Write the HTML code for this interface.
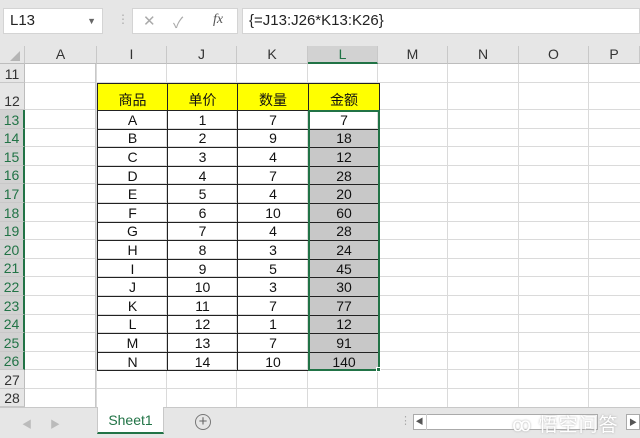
<!DOCTYPE html>
<html><head><meta charset="utf-8"><style>
*{margin:0;padding:0;box-sizing:border-box}
body{width:640px;height:438px;overflow:hidden;background:#fff;font-family:"Liberation Sans","Noto Sans CJK SC",sans-serif;position:relative}
.a{position:absolute}
.top{left:0;top:0;width:640px;height:46px;background:#e6e6e6}
.nb{left:3px;top:8px;width:100px;height:26px;background:#fff;border:1px solid #d4d4d4;font-size:15px;line-height:24px;padding-left:6px;color:#222}
.fb{left:132px;top:8px;width:106px;height:26px;background:#fff;border:1px solid #d4d4d4}
.fx{left:242px;top:8px;width:398px;height:26px;background:#fff;border:1px solid #d4d4d4;font-size:15px;line-height:24px;padding-left:6px;color:#222}
.ch{top:46px;height:18px;background:#e6e6e6;border-right:1px solid #c8c8c8;border-bottom:1px solid #bdbdbd;text-align:center;font-size:14px;line-height:17px;color:#333}
.rh{left:0;width:25px;background:#e6e6e6;border-bottom:1px solid #c8c8c8;border-right:1px solid #bdbdbd;font-size:14px;color:#333;text-align:center;display:flex;align-items:flex-end;justify-content:center;padding-bottom:0}
.hl{left:25px;width:615px;height:1px;background:#dadada}
.vl{top:64px;width:1px;height:343px;background:#dadada}
table{position:absolute;left:97px;top:83px;border-collapse:collapse;font-size:14px;color:#111}
td{border:1px solid #222;text-align:center;height:18.6px;padding:0;line-height:16px}
tr.h td{background:#ffff00;height:27px;font-size:14px;padding-top:6px}
td.g{background:#c8c8c8}
.sel{left:308px;top:110px;width:72px;height:261px;border:2px solid #217346}
.tb{left:0;top:407px;width:640px;height:31px;background:#e6e6e6;border-top:1px solid #c8c8c8}
</style></head><body>
<div class="a top"></div>
<div class="a nb">L13<span style="position:absolute;right:6px;top:0;font-size:9px;color:#666">▼</span></div>
<div class="a" style="left:117px;top:12px;color:#aaa;font-size:12px">⋮</div>
<div class="a fb"><span class="a" style="left:10px;top:3px;color:#aaa;font-size:15px">✕</span><span class="a" style="left:40px;top:3px;color:#aaa;font-size:15px">✓</span><span class="a" style="left:80px;top:3px;color:#555;font-size:14px;font-style:italic;font-family:'Liberation Serif',serif">fx</span></div>
<div class="a fx">{=J13:J26*K13:K26}</div>

<div class="a ch" style="left:0;width:25px;background:#e6e6e6"><span style="position:absolute;right:4px;bottom:2px;width:0;height:0;border-left:10px solid transparent;border-bottom:10px solid #b5b5b5"></span></div>
<div class="a ch" style="left:25px;width:72px">A</div>
<div class="a ch" style="left:97px;width:70px">I</div>
<div class="a ch" style="left:167px;width:70px">J</div>
<div class="a ch" style="left:237px;width:71px">K</div>
<div class="a ch" style="left:308px;width:70px;background:#d2d2d2;border-bottom:2px solid #217346;color:#217346">L</div>
<div class="a ch" style="left:378px;width:70px">M</div>
<div class="a ch" style="left:448px;width:71px">N</div>
<div class="a ch" style="left:519px;width:70px">O</div>
<div class="a ch" style="left:589px;width:51px">P</div>

<div class="a rh" style="top:64px;height:19px">11</div>
<div class="a rh" style="top:83px;height:27px">12</div>
<div class="a rh" style="top:110px;height:18.6px;background:#d2d2d2;color:#217346;border-right:2px solid #217346">13</div>
<div class="a rh" style="top:128.6px;height:18.6px;background:#d2d2d2;color:#217346;border-right:2px solid #217346">14</div>
<div class="a rh" style="top:147.2px;height:18.6px;background:#d2d2d2;color:#217346;border-right:2px solid #217346">15</div>
<div class="a rh" style="top:165.8px;height:18.6px;background:#d2d2d2;color:#217346;border-right:2px solid #217346">16</div>
<div class="a rh" style="top:184.4px;height:18.6px;background:#d2d2d2;color:#217346;border-right:2px solid #217346">17</div>
<div class="a rh" style="top:203px;height:18.6px;background:#d2d2d2;color:#217346;border-right:2px solid #217346">18</div>
<div class="a rh" style="top:221.6px;height:18.6px;background:#d2d2d2;color:#217346;border-right:2px solid #217346">19</div>
<div class="a rh" style="top:240.2px;height:18.6px;background:#d2d2d2;color:#217346;border-right:2px solid #217346">20</div>
<div class="a rh" style="top:258.8px;height:18.6px;background:#d2d2d2;color:#217346;border-right:2px solid #217346">21</div>
<div class="a rh" style="top:277.4px;height:18.6px;background:#d2d2d2;color:#217346;border-right:2px solid #217346">22</div>
<div class="a rh" style="top:296px;height:18.6px;background:#d2d2d2;color:#217346;border-right:2px solid #217346">23</div>
<div class="a rh" style="top:314.6px;height:18.6px;background:#d2d2d2;color:#217346;border-right:2px solid #217346">24</div>
<div class="a rh" style="top:333.2px;height:18.6px;background:#d2d2d2;color:#217346;border-right:2px solid #217346">25</div>
<div class="a rh" style="top:351.8px;height:18.6px;background:#d2d2d2;color:#217346;border-right:2px solid #217346">26</div>
<div class="a rh" style="top:370.4px;height:18.3px">27</div>
<div class="a rh" style="top:388.7px;height:18.3px">28</div>

<div class="a hl" style="top:82px"></div>
<div class="a hl" style="top:109px"></div>
<div class="a hl" style="top:127.6px"></div><div class="a hl" style="top:146.2px"></div><div class="a hl" style="top:164.8px"></div><div class="a hl" style="top:183.4px"></div><div class="a hl" style="top:202px"></div><div class="a hl" style="top:220.6px"></div><div class="a hl" style="top:239.2px"></div><div class="a hl" style="top:257.8px"></div><div class="a hl" style="top:276.4px"></div><div class="a hl" style="top:295px"></div><div class="a hl" style="top:313.6px"></div><div class="a hl" style="top:332.2px"></div><div class="a hl" style="top:350.8px"></div><div class="a hl" style="top:369.4px"></div><div class="a hl" style="top:387.7px"></div>
<div class="a vl" style="left:95px;background:#c8c8c8"></div><div class="a vl" style="left:96px"></div>
<div class="a vl" style="left:166px"></div><div class="a vl" style="left:236px"></div><div class="a vl" style="left:307px"></div><div class="a vl" style="left:377px"></div><div class="a vl" style="left:447px"></div><div class="a vl" style="left:518px"></div><div class="a vl" style="left:588px"></div>

<table>
<colgroup><col style="width:70px"><col style="width:70px"><col style="width:71px"><col style="width:71px"></colgroup>
<tr class="h"><td>商品</td><td>单价</td><td>数量</td><td>金额</td></tr>
<tr><td>A</td><td>1</td><td>7</td><td>7</td></tr>
<tr><td>B</td><td>2</td><td>9</td><td class="g">18</td></tr>
<tr><td>C</td><td>3</td><td>4</td><td class="g">12</td></tr>
<tr><td>D</td><td>4</td><td>7</td><td class="g">28</td></tr>
<tr><td>E</td><td>5</td><td>4</td><td class="g">20</td></tr>
<tr><td>F</td><td>6</td><td>10</td><td class="g">60</td></tr>
<tr><td>G</td><td>7</td><td>4</td><td class="g">28</td></tr>
<tr><td>H</td><td>8</td><td>3</td><td class="g">24</td></tr>
<tr><td>I</td><td>9</td><td>5</td><td class="g">45</td></tr>
<tr><td>J</td><td>10</td><td>3</td><td class="g">30</td></tr>
<tr><td>K</td><td>11</td><td>7</td><td class="g">77</td></tr>
<tr><td>L</td><td>12</td><td>1</td><td class="g">12</td></tr>
<tr><td>M</td><td>13</td><td>7</td><td class="g">91</td></tr>
<tr><td>N</td><td>14</td><td>10</td><td class="g">140</td></tr>
</table>
<div class="a sel"></div>
<div class="a" style="left:376px;top:367px;width:5px;height:5px;background:#217346;border:1px solid #fff"></div>

<div class="a tb"></div>
<div class="a" style="left:22px;top:416px;color:#bbb;font-size:10px">◀</div>
<div class="a" style="left:50px;top:416px;color:#bbb;font-size:10px">▶</div>
<div class="a" style="left:97px;top:407px;width:67px;height:27px;background:#fff;border-bottom:2px solid #217346;color:#217346;font-size:14px;text-align:center;line-height:26px;border-left:1px solid #c8c8c8;border-right:1px solid #c8c8c8">Sheet1</div>
<div class="a" style="left:195px;top:414px;width:16px;height:16px;border:1px solid #777;border-radius:50%;text-align:center;line-height:13px;color:#666;font-size:15px">+</div>
<div class="a" style="left:400px;top:414px;color:#aaa;font-size:11px">⋮</div>
<div class="a" style="left:413px;top:414px;width:185px;height:16px;background:#fff;border:1px solid #aaa"></div>
<div class="a" style="left:413px;top:414px;width:14px;height:16px;border-right:1px solid #ccc;font-size:8px;color:#555;text-align:center;line-height:15px">◀</div>
<div class="a" style="left:512px;top:410px;color:#fff;font-size:19px;letter-spacing:1px;text-shadow:0 0 2px #aaa">ꝏ 悟空问答</div>
<div class="a" style="left:626px;top:414px;width:14px;height:16px;background:#fff;border:1px solid #aaa;font-size:8px;color:#555;text-align:center;line-height:15px">▶</div>
</body></html>
